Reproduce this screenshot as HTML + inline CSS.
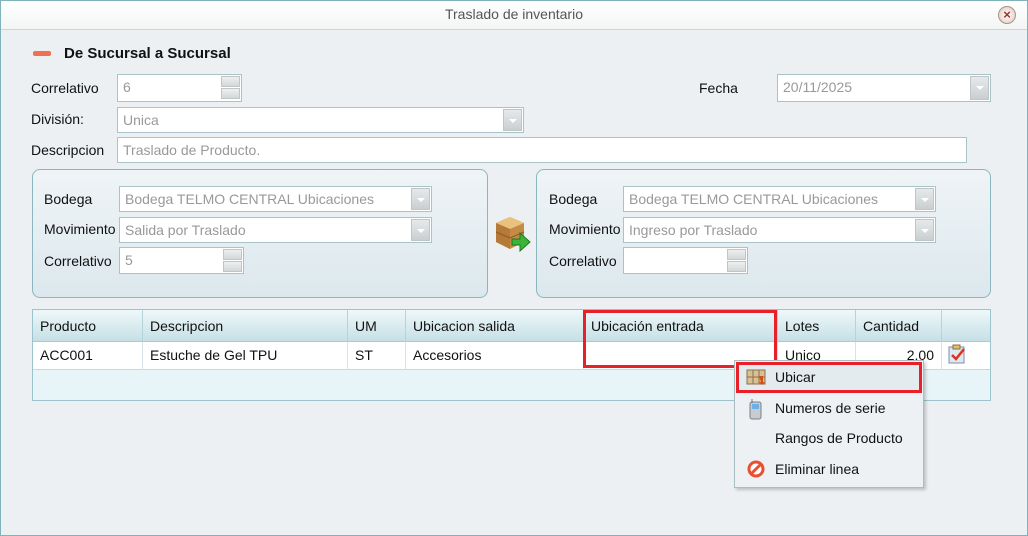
<!DOCTYPE html>
<html><head><meta charset="utf-8"><style>
*{box-sizing:border-box;margin:0;padding:0}
body{width:1028px;height:536px;overflow:hidden;font-family:"Liberation Sans",sans-serif;font-size:14px;color:#111;background:#ecf0f2;position:relative}
.a{position:absolute}
.win{left:0;top:0;width:1028px;height:536px;border:1px solid #7fb2ba;background:#ecf0f2}
.title{left:1px;top:1px;width:1026px;height:29px;background:linear-gradient(#fff,#f3f5f5);border-bottom:1px solid #cfd6d8;text-align:center;line-height:27px;color:#555}
.in{position:absolute;background:#fff;border:1px solid #a9c3c8;color:#999;padding-left:5px;line-height:24px;white-space:nowrap;overflow:hidden}
.dd{position:absolute;right:1px;top:1px;width:19px;bottom:1px;background:linear-gradient(#e6e9ea,#c9cfd1);border:1px solid #c0c6c8}
.dd:after{content:"";position:absolute;left:5px;top:9px;border-left:4px solid transparent;border-right:4px solid transparent;border-top:4px solid #fff}
.sp{position:absolute;right:1px;width:19px;height:11px;background:linear-gradient(#eef0f0,#d2d7d8);border:1px solid #c0c6c8}
.lb{position:absolute;white-space:nowrap}
.panel{border:1px solid #8ab7bf;border-radius:8px;background:linear-gradient(#eff4f6,#dce8ed)}
.grid{left:32px;top:309px;width:959px;height:92px;border:1px solid #9cc4cc;background:#e7f5f9}
.hd{position:absolute;top:0;height:32px;background:linear-gradient(#eef8fa,#c6e0e6);border-right:1px solid #b5d3d9;border-bottom:1px solid #a8cbd2;line-height:32px;padding-left:7px}
.cl{position:absolute;top:32px;height:28px;background:#fff;border-right:1px solid #d5e3e6;border-bottom:1px solid #c5dade;line-height:26px;padding-left:7px}
.menu{left:734px;top:360px;width:190px;height:128px;background:#edf1f3;border:1px solid #aabdc2;box-shadow:2px 2px 3px rgba(0,0,0,.2)}
.mi{position:absolute;left:40px}
</style></head><body>
<div class="a win"></div>
<div class="a title">Traslado de inventario</div>
<div class="a" style="left:998px;top:6px;width:18px;height:18px;border-radius:50%;background:radial-gradient(#fff,#d8c8c0);border:1px solid #b09080;color:#a03020;font-size:13px;line-height:15px;text-align:center;font-weight:bold">×</div>
<div class="a" style="left:33px;top:51px;width:18px;height:5px;border-radius:2px;background:#f07050"></div>
<div class="lb" style="left:64px;top:45px;font-weight:bold;font-size:15px">De Sucursal a Sucursal</div>

<div class="lb" style="left:31px;top:80px">Correlativo</div>
<div class="in" style="left:117px;top:74px;width:125px;height:28px">6<div class="sp" style="top:1px"></div><div class="sp" style="top:13px"></div></div>
<div class="lb" style="left:699px;top:80px">Fecha</div>
<div class="in" style="left:777px;top:74px;width:214px;height:28px">20/11/2025<div class="dd"></div></div>
<div class="lb" style="left:31px;top:111px">División:</div>
<div class="in" style="left:117px;top:107px;width:407px;height:26px">Unica<div class="dd"></div></div>
<div class="lb" style="left:31px;top:142px">Descripcion</div>
<div class="in" style="left:117px;top:137px;width:850px;height:26px">Traslado de Producto.</div>

<div class="a panel" style="left:32px;top:169px;width:456px;height:129px"></div>
<div class="lb" style="left:44px;top:191px">Bodega</div>
<div class="in" style="left:119px;top:186px;width:313px;height:26px">Bodega TELMO CENTRAL Ubicaciones<div class="dd"></div></div>
<div class="lb" style="left:44px;top:221px">Movimiento</div>
<div class="in" style="left:119px;top:217px;width:313px;height:26px">Salida por Traslado<div class="dd"></div></div>
<div class="lb" style="left:44px;top:253px">Correlativo</div>
<div class="in" style="left:119px;top:247px;width:125px;height:27px">5<div class="sp" style="top:1px"></div><div class="sp" style="top:13px"></div></div>

<svg class="a" style="left:492px;top:214px" width="40" height="38" viewBox="0 0 40 38">
<path d="M4 9 L18 3 L32 9 L32 28 L18 35 L4 28Z" fill="#c58b45"/>
<path d="M4 9 L18 15 L32 9 L18 3Z" fill="#e9c27e"/>
<path d="M18 15 L18 35 L4 28 L4 9Z" fill="#b57a3a"/>
<path d="M4 18 L18 24 L32 18" stroke="#8a5a25" fill="none"/>
<path d="M20 25 H28 V19 L38 28 L28 37 V31 H20Z" fill="#3ab43a" stroke="#1c7a1c"/>
</svg>

<div class="a panel" style="left:536px;top:169px;width:455px;height:129px"></div>
<div class="lb" style="left:549px;top:191px">Bodega</div>
<div class="in" style="left:623px;top:186px;width:313px;height:26px">Bodega TELMO CENTRAL Ubicaciones<div class="dd"></div></div>
<div class="lb" style="left:549px;top:221px">Movimiento</div>
<div class="in" style="left:623px;top:217px;width:313px;height:26px">Ingreso por Traslado<div class="dd"></div></div>
<div class="lb" style="left:549px;top:253px">Correlativo</div>
<div class="in" style="left:623px;top:247px;width:125px;height:27px"><div class="sp" style="top:1px"></div><div class="sp" style="top:13px"></div></div>

<div class="a grid">
<div class="hd" style="left:0;width:110px">Producto</div>
<div class="hd" style="left:110px;width:205px">Descripcion</div>
<div class="hd" style="left:315px;width:58px">UM</div>
<div class="hd" style="left:373px;width:178px">Ubicacion salida</div>
<div class="hd" style="left:551px;width:194px">Ubicación entrada</div>
<div class="hd" style="left:745px;width:78px">Lotes</div>
<div class="hd" style="left:823px;width:86px">Cantidad</div>
<div class="hd" style="left:909px;width:48px;border-right:none"></div>
<div class="cl" style="left:0;width:110px">ACC001</div>
<div class="cl" style="left:110px;width:205px">Estuche de Gel TPU</div>
<div class="cl" style="left:315px;width:58px">ST</div>
<div class="cl" style="left:373px;width:178px">Accesorios</div>
<div class="cl" style="left:551px;width:194px"></div>
<div class="cl" style="left:745px;width:78px">Unico</div>
<div class="cl" style="left:823px;width:86px;text-align:right;padding-right:7px">2.00</div>
<div class="cl" style="left:909px;width:48px;border-right:none"></div>
</div>
<svg class="a" style="left:948px;top:344px" width="18" height="20"><rect x="1" y="3" width="15" height="16" fill="#dde8f2" stroke="#7a8ea8"/><rect x="5" y="1" width="7" height="4" fill="#e0c070" stroke="#8a7040"/><path d="M4 11 L8 15 L16 5" stroke="#e03020" stroke-width="2.5" fill="none"/></svg>
<div class="a" style="left:583px;top:310px;width:194px;height:58px;border:3px solid #e8202a"></div>

<div class="a menu">
<div class="a" style="left:1px;top:1px;width:186px;height:31px;border:3px solid #e8202a;background:#e4ebee"></div>
<svg class="a" style="left:11px;top:7px" width="22" height="18"><rect x="1" y="2" width="18" height="14" fill="#d8c090" stroke="#8a7050"/><path d="M1 9H19M7 2V16M13 2V16" stroke="#8a7050"/><path d="M13 8 h4 v6 h2 l-3 3 -3 -3 h2z" fill="#d85010"/></svg>
<div class="mi" style="top:8px">Ubicar</div>
<svg class="a" style="left:14px;top:37px" width="14" height="22"><rect x="1" y="4" width="11" height="17" rx="2" fill="#c8ccd0" stroke="#7a8088"/><rect x="3" y="6" width="7" height="5" fill="#6ab0e8"/><path d="M3 1V5" stroke="#777"/></svg>
<div class="mi" style="top:39px">Numeros de serie</div>
<div class="mi" style="top:69px">Rangos de Producto</div>
<svg class="a" style="left:12px;top:99px" width="18" height="18"><circle cx="9" cy="9" r="7" fill="#fff" stroke="#e85030" stroke-width="3"/><path d="M4 14 L14 4" stroke="#e85030" stroke-width="3"/></svg>
<div class="mi" style="top:100px">Eliminar linea</div>
</div>
</body></html>
